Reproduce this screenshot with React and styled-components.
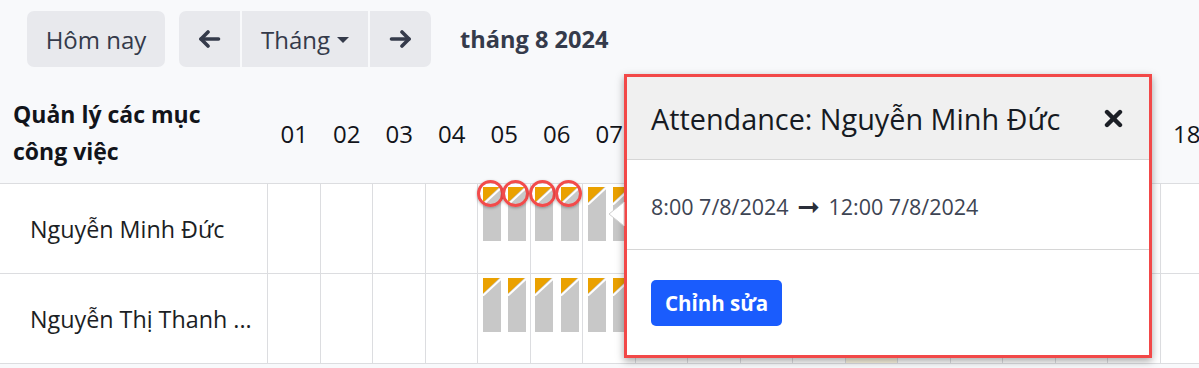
import React from "react";
import styled, { createGlobalStyle } from "styled-components";

const GlobalStyle = createGlobalStyle`
  body {
    margin: 0;
    background: #f8f9fb;
    font-family: "Open Sans", "Noto Sans", sans-serif;
    color: #212529;
  }
`;

const days = Array.from({ length: 18 }, (_, i) => i + 1);
const workDays = [5, 6, 7, 8, 9, 12, 13, 14, 15, 16];

const resources = [
  { name: "Nguyễn Minh Đức", marked: 4, offset: 3 },
  { name: "Nguyễn Thị Thanh ...", marked: 0, offset: 4 },
];

const pad = (n) => String(n).padStart(2, "0");

const ArrowIcon = ({ right }) => (
  <svg width="23" height="18" viewBox="0 0 23 18">
    <g
      transform={right ? "translate(23 0) scale(-1 1)" : undefined}
      fill="none"
      stroke="#353b4b"
      strokeWidth="3.6"
      strokeLinecap="round"
      strokeLinejoin="round"
    >
      <path d="M20.5 9H3" />
      <path d="M10 2L3 9l7 7" />
    </g>
  </svg>
);

const CloseIcon = () => (
  <svg width="19" height="19" viewBox="0 0 19 19">
    <g stroke="#1c1f26" strokeWidth="4.4" strokeLinecap="round">
      <path d="M3 3l13 13" />
      <path d="M16 3L3 16" />
    </g>
  </svg>
);

const Corner = () => (
  <svg width="18" height="18" viewBox="0 0 18 18">
    <polygon points="0,0 16.5,0 0,15.5" fill="#eaa100" />
    <line x1="-0.5" y1="18" x2="18.5" y2="0.5" stroke="#ffffff" strokeWidth="2" />
  </svg>
);

const Event = ({ marked }) => (
  <Bar>
    <Corner />
    {marked && <Ring />}
  </Bar>
);

const App = () => {
  return (
    <Page>
      <GlobalStyle />
      <Toolbar>
        <TodayButton>Hôm nay</TodayButton>
        <ButtonGroup>
          <GroupButton $w={61}>
            <ArrowIcon />
          </GroupButton>
          <GroupButton $w={126}>
            Tháng
            <Caret />
          </GroupButton>
          <GroupButton $w={61}>
            <ArrowIcon right />
          </GroupButton>
        </ButtonGroup>
        <Title>tháng 8 2024</Title>
      </Toolbar>

      <Timeline>
        <HeaderRow>
          <ResourceHead>
            Quản lý các mục
            <br />
            công việc
          </ResourceHead>
          <Days>
            {days.map((d) => (
              <DayHead key={d}>{pad(d)}</DayHead>
            ))}
          </Days>
        </HeaderRow>

        {resources.map((r) => {
          let count = 0;
          return (
            <Row key={r.name}>
              <ResourceCell>{r.name}</ResourceCell>
              <Days>
                {days.map((d) => (
                  <DayCell key={d} $today={d === 12} $offset={r.offset}>
                    {[0, 1].map((half) => {
                      const has = workDays.includes(d);
                      const marked = has && count++ < r.marked;
                      return (
                        <Slot key={half}>{has && <Event marked={marked} />}</Slot>
                      );
                    })}
                  </DayCell>
                ))}
              </Days>
            </Row>
          );
        })}
      </Timeline>

      <Popover>
        <PopArrow width="17" height="26" viewBox="0 0 17 26">
          <polygon points="16,1 1,13 16,25" fill="#ffffff" stroke="#cfcfcf" strokeWidth="1" />
        </PopArrow>
        <PopHeader>
          <PopTitle>Attendance: Nguyễn Minh Đức</PopTitle>
          <CloseIcon />
        </PopHeader>
        <PopBody>
          8:00 7/8/2024 <Arrow>➞</Arrow> 12:00 7/8/2024
        </PopBody>
        <PopFooter>
          <PrimaryButton>Chỉnh sửa</PrimaryButton>
        </PopFooter>
      </Popover>
    </Page>
  );
};

const Page = styled.div`
  position: relative;
  height: 368px;
  overflow: hidden;
  padding-top: 11px;
  box-sizing: border-box;
`;

const Toolbar = styled.div`
  display: flex;
  align-items: center;
  height: 56px;
  padding-left: 27px;
`;

const BaseButton = styled.div`
  display: flex;
  align-items: center;
  justify-content: center;
  height: 56px;
  box-sizing: border-box;
  background: #e8e9ed;
  color: #343a4a;
  font-size: 24px;
`;

const TodayButton = styled(BaseButton)`
  width: 138px;
  border-radius: 7px;
`;

const ButtonGroup = styled.div`
  display: flex;
  gap: 2px;
  margin-left: 14px;
`;

const GroupButton = styled(BaseButton)`
  width: ${(p) => p.$w}px;
  &:first-child {
    border-radius: 7px 0 0 7px;
  }
  &:last-child {
    border-radius: 0 7px 7px 0;
  }
`;

const Caret = styled.span`
  width: 0;
  height: 0;
  margin-left: 7px;
  margin-top: 2px;
  border-left: 6px solid transparent;
  border-right: 6px solid transparent;
  border-top: 6px solid #343a4a;
`;

const Title = styled.div`
  margin-left: 29px;
  font-size: 23.6px;
  font-weight: 700;
  color: #353b4b;
`;

const Timeline = styled.div`
  margin-top: 24px;
`;

const HeaderRow = styled.div`
  display: flex;
  height: 92px;
  border-bottom: 1px solid #dcdde0;
`;

const ResourceHead = styled.div`
  flex: 0 0 268px;
  box-sizing: border-box;
  padding: 5px 0 0 13px;
  font-size: 23px;
  font-weight: 700;
  line-height: 37px;
  color: #12141a;
`;

const Days = styled.div`
  display: flex;
  flex: 1;
`;

const DayHead = styled.div`
  flex: 0 0 52.5px;
  display: flex;
  align-items: center;
  justify-content: center;
  padding-bottom: 8px;
  font-size: 24px;
  color: #12141a;
`;

const Row = styled.div`
  display: flex;
  height: 90px;
  box-sizing: border-box;
  border-bottom: 1px solid #dcdde0;
  background: #ffffff;
`;

const ResourceCell = styled.div`
  flex: 0 0 268px;
  box-sizing: border-box;
  display: flex;
  align-items: center;
  padding-left: 30px;
  border-right: 1px solid #dcdde0;
  font-size: 23.3px;
  color: #1b1e24;
  white-space: nowrap;
`;

const DayCell = styled.div`
  flex: 0 0 52.5px;
  box-sizing: border-box;
  display: flex;
  padding-top: ${(p) => p.$offset}px;
  border-right: 1px solid #dcdde0;
  background: ${(p) => (p.$today ? "#fcf6e2" : "transparent")};
`;

const Slot = styled.div`
  flex: 1;
  padding-left: 4.5px;
`;

const Bar = styled.div`
  position: relative;
  width: 18px;
  height: 54px;
  background: #c8c8c8;
  svg {
    display: block;
  }
`;

const Ring = styled.span`
  position: absolute;
  left: -6px;
  top: -7px;
  width: 27px;
  height: 27px;
  box-sizing: border-box;
  border: 3px solid #f24b4b;
  border-radius: 50%;
  box-shadow: 0 1px 3px rgba(0, 0, 0, 0.3);
`;

const Popover = styled.div`
  position: absolute;
  left: 624px;
  top: 74px;
  width: 528px;
  height: 284px;
  box-sizing: border-box;
  border: 3px solid #f24848;
  background: #ffffff;
  box-shadow: 0 3px 8px rgba(0, 0, 0, 0.35);
`;

const PopArrow = styled.svg`
  position: absolute;
  left: -19px;
  top: 124px;
`;

const PopHeader = styled.div`
  display: flex;
  align-items: center;
  justify-content: space-between;
  height: 83px;
  box-sizing: border-box;
  padding: 0 26px 0 24px;
  background: #f0f0f0;
  border-bottom: 1px solid #d6d6d6;
`;

const PopTitle = styled.div`
  font-size: 28.8px;
  color: #161a22;
`;

const PopBody = styled.div`
  display: flex;
  align-items: center;
  gap: 3px;
  height: 90px;
  box-sizing: border-box;
  padding: 3px 24px 0;
  border-bottom: 1px solid #d6d6d6;
  font-size: 21.5px;
  color: #3d4453;
  white-space: pre;
`;

const Arrow = styled.span`
  font-family: "DejaVu Sans", sans-serif;
  font-size: 27px;
  line-height: 1;
  color: #2a2f3a;
`;

const PopFooter = styled.div`
  padding: 30px 24px;
`;

const PrimaryButton = styled.div`
  display: inline-flex;
  align-items: center;
  height: 46px;
  padding: 0 14px;
  border-radius: 5px;
  background: #1a5cfd;
  color: #ffffff;
  font-size: 20.5px;
  font-weight: 700;
`;

export default App;
